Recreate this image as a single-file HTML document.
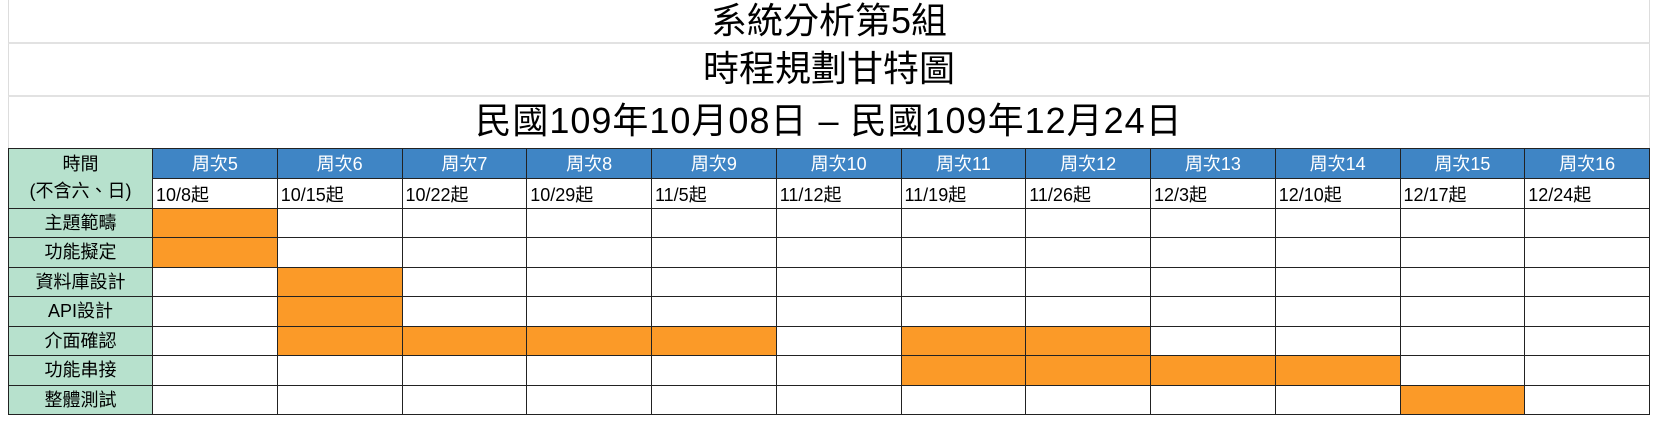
<!DOCTYPE html>
<html><head><meta charset="utf-8"><style>
*{margin:0;padding:0;box-sizing:border-box}
body{width:1664px;height:424px;background:#fff;overflow:hidden;position:relative;font-family:"Liberation Sans","Noto Sans CJK TC",sans-serif;color:#000}
.t{position:absolute;left:8px;width:1642px;border-left:1px solid #ddd;border-right:1px solid #ddd;border-bottom:2px solid #e2e2e2;text-align:center;font-size:36px;white-space:nowrap}
table{position:absolute;left:8px;top:148px;border-collapse:collapse;table-layout:fixed;width:1642px}
td{border:1.5px solid #222;font-size:18px;height:29.5px;line-height:20px;padding:0;white-space:nowrap;overflow:hidden}
td.l{background:#b7e1cd;text-align:center}
td.h{background:#3f85c5;color:#fff;text-align:center;height:30px}
td.d{text-align:left;padding-left:3px;padding-top:3px}
td.o{background:#fb9a28}
</style></head><body>
<div class="t" style="top:0;height:44px;line-height:42px">系統分析第5組</div>
<div class="t" style="top:44px;height:53px;line-height:50px">時程規劃甘特圖</div>
<div class="t" style="top:97px;height:51px;line-height:48px;border-bottom:none;letter-spacing:1px">民國109年10月08日 – 民國109年12月24日</div>
<table>
<colgroup><col style="width:144px"><col span="12" style="width:124.75px"></colgroup>
<tr><td class="l" rowspan="2" style="line-height:27px">時間<br>(不含六、日)</td>
<td class="h">周次5</td><td class="h">周次6</td><td class="h">周次7</td><td class="h">周次8</td><td class="h">周次9</td><td class="h">周次10</td><td class="h">周次11</td><td class="h">周次12</td><td class="h">周次13</td><td class="h">周次14</td><td class="h">周次15</td><td class="h">周次16</td></tr>
<tr><td class="d">10/8起</td><td class="d">10/15起</td><td class="d">10/22起</td><td class="d">10/29起</td><td class="d">11/5起</td><td class="d">11/12起</td><td class="d">11/19起</td><td class="d">11/26起</td><td class="d">12/3起</td><td class="d">12/10起</td><td class="d">12/17起</td><td class="d">12/24起</td></tr>
<tr><td class="l">主題範疇</td><td class="o"></td><td></td><td></td><td></td><td></td><td></td><td></td><td></td><td></td><td></td><td></td><td></td></tr>
<tr><td class="l">功能擬定</td><td class="o"></td><td></td><td></td><td></td><td></td><td></td><td></td><td></td><td></td><td></td><td></td><td></td></tr>
<tr><td class="l">資料庫設計</td><td></td><td class="o"></td><td></td><td></td><td></td><td></td><td></td><td></td><td></td><td></td><td></td><td></td></tr>
<tr><td class="l">API設計</td><td></td><td class="o"></td><td></td><td></td><td></td><td></td><td></td><td></td><td></td><td></td><td></td><td></td></tr>
<tr><td class="l">介面確認</td><td></td><td class="o"></td><td class="o"></td><td class="o"></td><td class="o"></td><td></td><td class="o"></td><td class="o"></td><td></td><td></td><td></td><td></td></tr>
<tr><td class="l">功能串接</td><td></td><td></td><td></td><td></td><td></td><td></td><td class="o"></td><td class="o"></td><td class="o"></td><td class="o"></td><td></td><td></td></tr>
<tr><td class="l">整體測試</td><td></td><td></td><td></td><td></td><td></td><td></td><td></td><td></td><td></td><td></td><td class="o"></td><td></td></tr>
</table>
</body></html>
